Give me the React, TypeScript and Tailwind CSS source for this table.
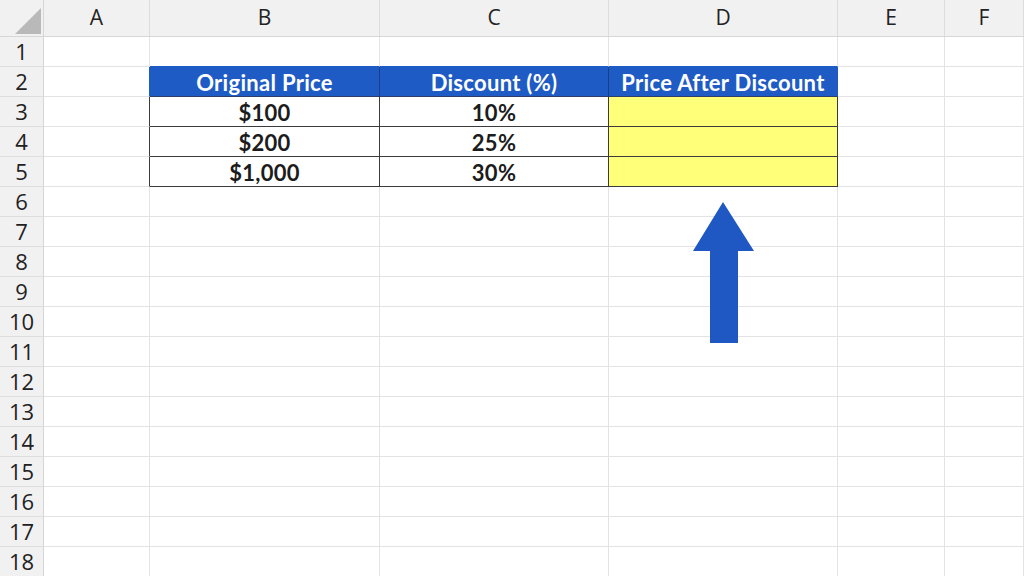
import React from 'react';

const COLS = [
  { key: 'A', w: 'w-[106px]' },
  { key: 'B', w: 'w-[230px]' },
  { key: 'C', w: 'w-[229px]' },
  { key: 'D', w: 'w-[229px]' },
  { key: 'E', w: 'w-[107px]' },
  { key: 'F', w: 'flex-1' },
];

const TABLE: Record<number, string[]> = {
  2: ['Original Price', 'Discount (%)', 'Price After Discount'],
  3: ['$100', '10%', ''],
  4: ['$200', '25%', ''],
  5: ['$1,000', '30%', ''],
};

const inTable = (r: number, c: number) => r >= 2 && r <= 5 && c >= 1 && c <= 3;

// border + background for one cell of the sheet
function cellClass(r: number, c: number) {
  let right = 'border-r-[#e3e3e3]';
  let bottom = 'border-b-[#e3e3e3]';
  let bg = 'bg-white';
  let text = 'text-[#1c1c1c]';

  if (inTable(r, c)) {
    right = 'border-r-[#3b3b3b]';
    bottom = 'border-b-[#3b3b3b]';
    if (r === 2) {
      bg = 'bg-[#1f5bc5]';
      text = 'text-white';
      right = c === 3 ? 'border-r-[#1f5bc5]' : 'border-r-[#173f8a]';
      bottom = 'border-b-[#2d3f66]';
    } else if (c === 3) {
      bg = 'bg-[#ffff7a]';
    }
  }
  if (r === 1 && c >= 1 && c <= 3) bottom = 'border-b-[#1f5bc5]';
  if (c === 0 && r >= 2 && r <= 5) right = r === 2 ? 'border-r-[#1f5bc5]' : 'border-r-[#3b3b3b]';

  return `${bg} ${text} ${right} ${bottom}`;
}

function Arrow() {
  return (
    <svg className="absolute left-[690px] top-[200px]" width="70" height="146" viewBox="690 200 70 146">
      <polygon points="723,202 754,251 738,251 738,343 710,343 710,251 693,251" fill="#1f58c3" />
    </svg>
  );
}

export default function App() {
  const rows = Array.from({ length: 18 }, (_, i) => i + 1);

  return (
    <div className="relative w-[1024px] h-[576px] overflow-hidden bg-white font-['Lato','Liberation_Sans',sans-serif]">
      {/* Column headers */}
      <div className="flex h-[37px] bg-[#f1f1f1] border-b border-b-[#d6d6d6]">
        <div className="relative w-[44px] border-r border-r-[#d6d6d6]">
          <svg className="absolute left-0 top-0" width="44" height="36">
            <polygon points="15,34 41,34 41,8" fill="#b9b9b9" />
          </svg>
        </div>
        {COLS.map((col) => (
          <div
            key={col.key}
            className={`${col.w} flex items-center justify-center border-r border-r-[#dcdcdc] text-[21px] text-[#222] font-['Open_Sans','Liberation_Sans',sans-serif]`}
          >
            {col.key}
          </div>
        ))}
      </div>

      {/* Rows */}
      {rows.map((r) => (
        <div key={r} className="flex h-[30px]">
          <div className="w-[44px] flex items-center justify-center bg-[#f1f1f1] border-r border-r-[#d6d6d6] border-b border-b-[#dedede] text-[22px] text-[#222] font-['Open_Sans','Liberation_Sans',sans-serif]">
            {r}
          </div>
          {COLS.map((col, c) => (
            <div
              key={col.key}
              className={`${col.w} flex items-center justify-center pt-[2px] border-r border-b text-[22px] font-bold tracking-[0.3px] ${cellClass(r, c)}`}
            >
              {inTable(r, c) ? TABLE[r][c - 1] : ''}
            </div>
          ))}
        </div>
      ))}

      <Arrow />
    </div>
  );
}
